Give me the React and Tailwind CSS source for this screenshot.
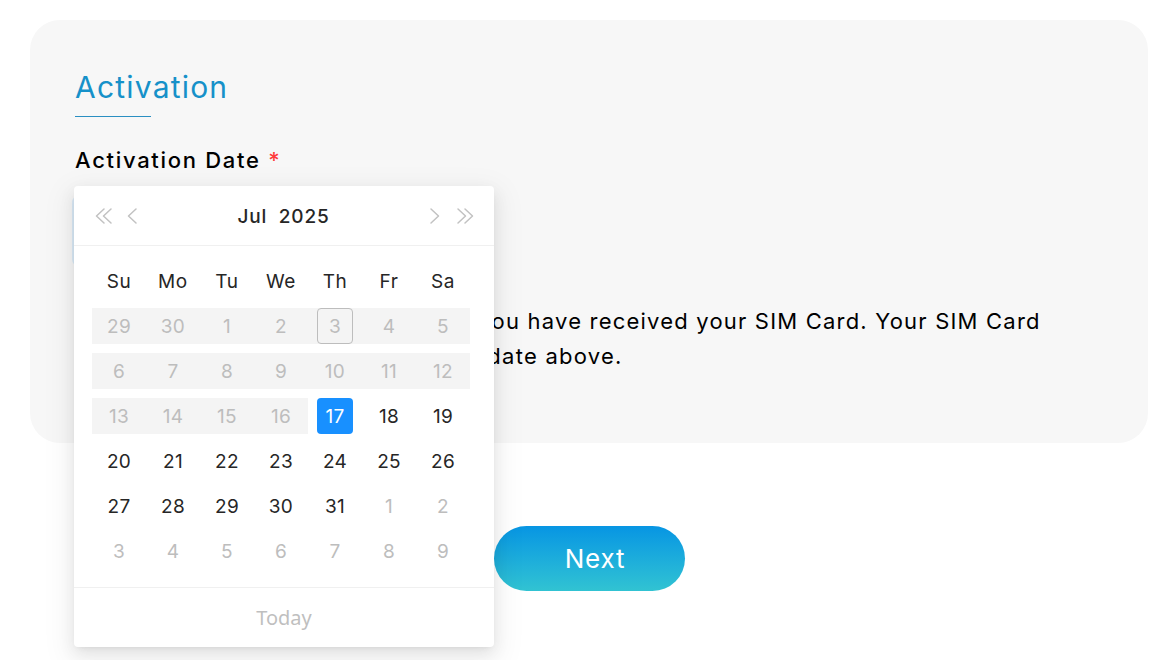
import React from "react";

const FONT = { fontFamily: 'Inter, "Noto Sans", sans-serif' };

// July 2025 grid, weeks start on Sunday
const weeks = [
  [29, 30, 1, 2, 3, 4, 5],
  [6, 7, 8, 9, 10, 11, 12],
  [13, 14, 15, 16, 17, 18, 19],
  [20, 21, 22, 23, 24, 25, 26],
  [27, 28, 29, 30, 31, 1, 2],
  [3, 4, 5, 6, 7, 8, 9],
];

const weekDays = ["Su", "Mo", "Tu", "We", "Th", "Fr", "Sa"];

const paths = {
  left: ["M10 2 2.5 9 10 16"],
  leftDouble: ["M10 2 2.5 9 10 16", "M17 2 9.5 9 17 16"],
  right: ["M2 2 9.5 9 2 16"],
  rightDouble: ["M3 2 10.5 9 3 16", "M10 2 17.5 9 10 16"],
};

const Chevron = ({ type }) => {
  const double = type.endsWith("Double");
  return (
    <svg
      width={double ? 20 : 12}
      height="18"
      viewBox={double ? "0 0 20 18" : "0 0 12 18"}
      fill="none"
      stroke="#c2c2c2"
      strokeWidth="1.5"
      strokeLinecap="round"
      strokeLinejoin="round"
    >
      {paths[type].map((d) => (
        <path key={d} d={d} />
      ))}
    </svg>
  );
};

const DayCell = ({ day, rowIdx, colIdx }) => {
  const prevMonth = rowIdx === 0 && colIdx < 2;
  const nextMonth = rowIdx >= 4 && !(rowIdx === 4 && colIdx < 5);
  const disabled = rowIdx < 2 || (rowIdx === 2 && colIdx < 4);
  const selected = rowIdx === 2 && day === 17;
  const today = rowIdx === 0 && day === 3;
  const muted = prevMonth || nextMonth || disabled;

  return (
    <div className="h-[45px] flex items-center">
      <div
        className={`h-[36px] w-full flex items-center justify-center ${
          disabled ? "bg-[#f4f4f4]" : ""
        }`}
      >
        <span
          className={`w-[36px] h-[36px] pt-[4px] flex items-center justify-center rounded-[4px] text-[19px] tracking-[0.3px] ${
            selected
              ? "bg-[#1890ff] text-white"
              : muted
              ? "text-[#bdbdbd]"
              : "text-[#262626]"
          } ${today ? "border border-[#bdbdbd]" : ""}`}
        >
          {day}
        </span>
      </div>
    </div>
  );
};

const DatePopup = () => (
  <div className="absolute left-[74px] top-[186px] w-[420px] bg-white rounded-[4px] shadow-[0_6px_16px_0_rgba(0,0,0,0.08),0_3px_6px_-4px_rgba(0,0,0,0.12),0_9px_28px_8px_rgba(0,0,0,0.05)]">
    {/* Header */}
    <div className="h-[60px] flex items-center pl-[20px] pr-[19px] border-b border-[#f0f0f0]">
      <div className="flex items-center gap-[12px]">
        <Chevron type="leftDouble" />
        <Chevron type="left" />
      </div>
      <div className="flex-1 pt-[4px] text-center text-[19px] font-medium text-[#262626] tracking-[0.8px]">
        Jul&nbsp; 2025
      </div>
      <div className="flex items-center gap-[14px]">
        <Chevron type="right" />
        <Chevron type="rightDouble" />
      </div>
    </div>

    {/* Body */}
    <div className="pl-[18px] pr-[24px] pt-[12px] pb-[14px]">
      <div className="grid grid-cols-7">
        {weekDays.map((d) => (
          <div
            key={d}
            className="h-[45px] pt-[4px] flex items-center justify-center text-[19px] text-[#262626] tracking-[0.6px]"
          >
            {d}
          </div>
        ))}
      </div>
      {weeks.map((week, r) => (
        <div key={r} className="grid grid-cols-7">
          {week.map((day, c) => (
            <DayCell key={c} day={day} rowIdx={r} colIdx={c} />
          ))}
        </div>
      ))}
    </div>

    {/* Footer */}
    <div
      className="h-[60px] border-t border-[#f0f0f0] flex items-center justify-center text-[20px] text-[#bfbfbf]"
      style={{ fontFamily: '"Noto Sans", sans-serif' }}
    >
      Today
    </div>
  </div>
);

export default function App() {
  return (
    <div className="relative w-[1172px] h-[660px] bg-white overflow-hidden" style={FONT}>
      <div className="pt-[20px] pl-[30px] pr-[24px]">
        <div className="h-[423px] bg-[#f7f7f7] rounded-[30px] pl-[45px] pt-[47px]">
          <h2 className="text-[30px] leading-[40px] text-[#1691c9] tracking-[1.2px]">Activation</h2>
          <div className="w-[76px] h-px bg-[#2a8fc2] mt-[9px]"></div>
          <div className="mt-[28px] text-[22px] leading-[30px] font-medium text-black tracking-[1.7px]">
            Activation Date <span className="text-[#ff3b3b]">*</span>
          </div>
          <div className="mt-[22px] w-[400px] h-[68px] bg-white rounded-[6px] border border-[#8fc4f0] shadow-[0_0_0_3px_rgba(5,145,255,0.12)]"></div>
          <p className="mt-[39px] text-[22px] leading-[35px] text-black tracking-[1.2px]">
            <span className="tracking-[1px]">Please choose the exact date once </span>
            you have received your SIM Card. Your SIM Card
            <br />
            <span className="tracking-[1.25px]">will be activated on the designated date above.</span>
          </p>
        </div>
      </div>

      <div className="flex justify-center pl-[6px] mt-[83px]">
        <button className="w-[191px] h-[65px] rounded-full bg-linear-to-b from-[#0795e3] to-[#31c3d2] text-white text-[26px] tracking-[0.8px] pl-[12px]">
          Next
        </button>
      </div>

      <DatePopup />
    </div>
  );
}
